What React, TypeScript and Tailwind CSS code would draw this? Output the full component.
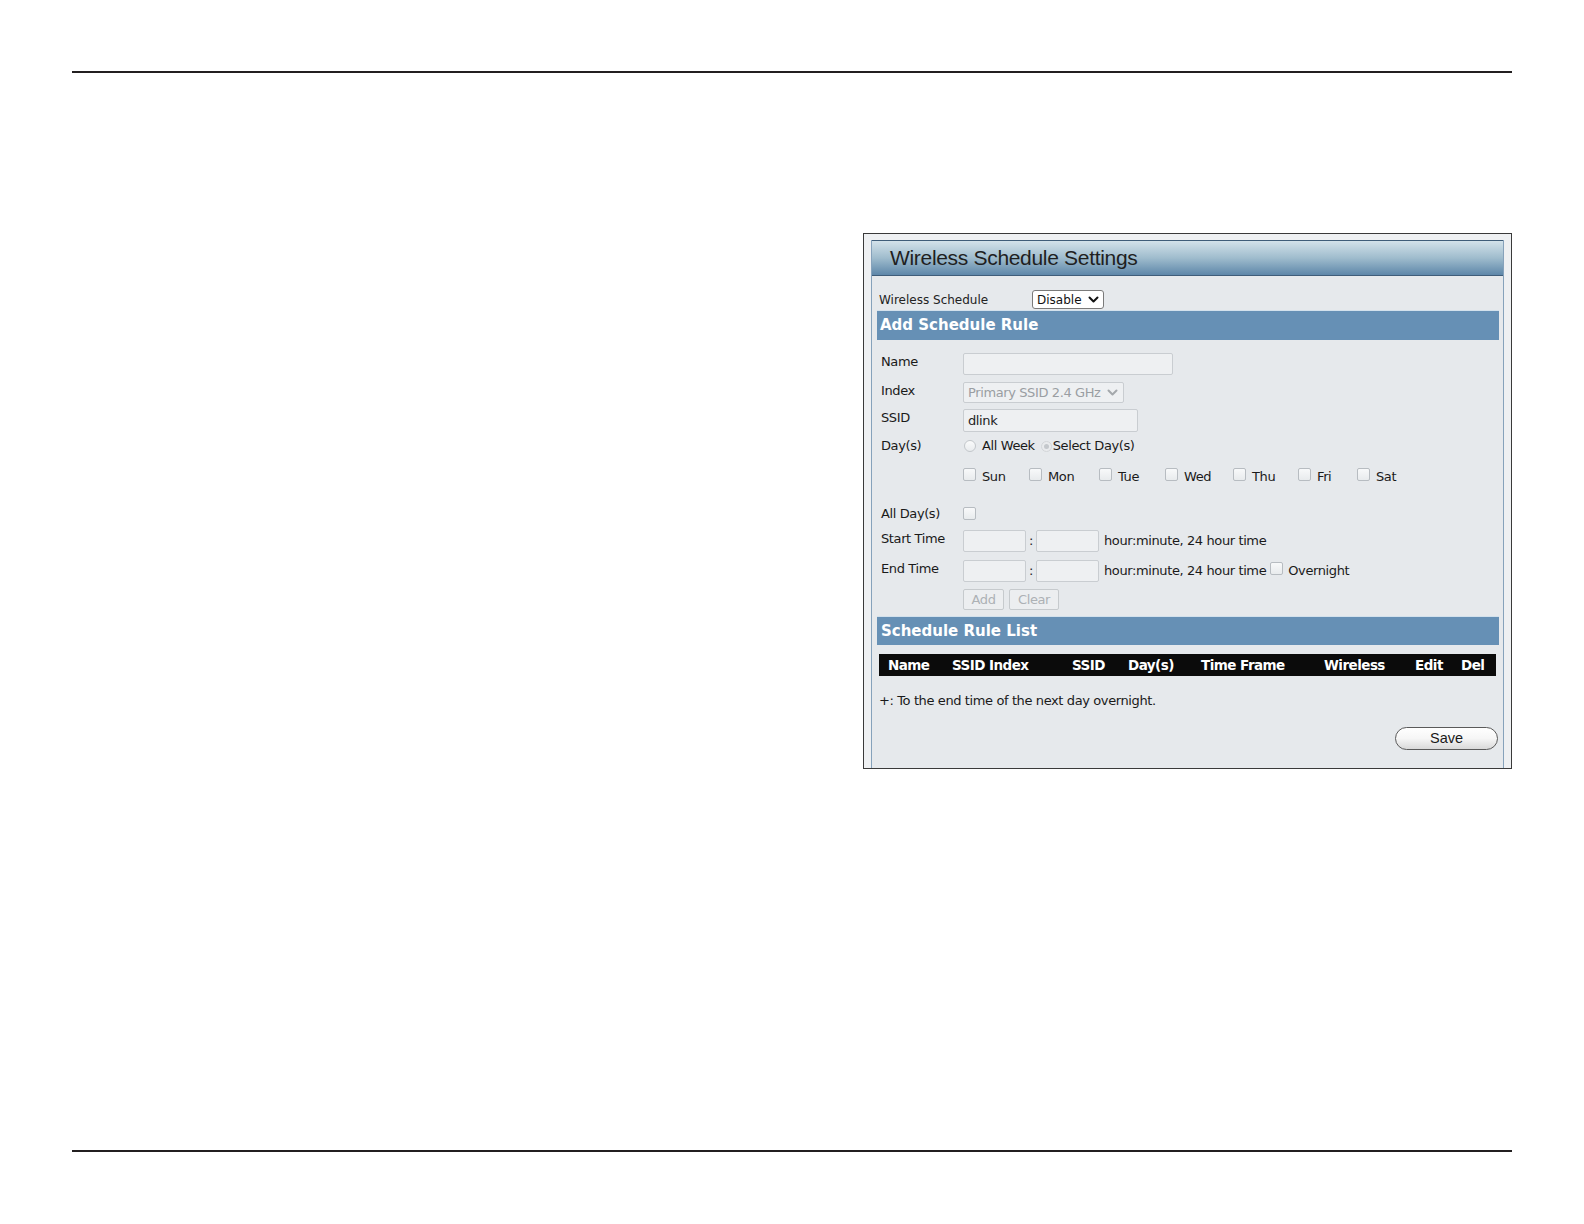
import React from "react";

const DJ = "font-['DejaVu_Sans',sans-serif]";
const LS = "font-['Liberation_Sans',Arial,sans-serif]";
const TXT = "text-[13px] tracking-[-0.03em]";

function Box({ className = "" }: { className?: string }) {
  return (
    <span
      className={`inline-block shrink-0 w-[13px] h-[13px] rounded-[2px] border border-[#b7bcc1] bg-gradient-to-b from-[#f8f9fa] to-[#e8ebed] ${className}`}
    />
  );
}

function Chevron({ color }: { color: string }) {
  return (
    <svg width="11" height="8" viewBox="0 0 11 8" className="shrink-0">
      <polyline points="1.5,1.5 5.5,5.5 9.5,1.5" fill="none" stroke={color} strokeWidth="2" strokeLinecap="round" strokeLinejoin="round" />
    </svg>
  );
}

function Input({ w, value = "" }: { w: string; value?: string }) {
  return (
    <div
      className={`${w} h-full rounded-[2px] border border-[#c9cdd1] bg-[#eef0f2] pl-[4px] flex items-center ${TXT} text-[#222] ${DJ}`}
    >
      {value}
    </div>
  );
}

function Label({ children }: { children: React.ReactNode }) {
  return (
    <div className={`w-[82px] shrink-0 self-start leading-[17px] ${TXT} text-[#1a1a1a] whitespace-nowrap ${DJ}`}>
      {children}
    </div>
  );
}

const days: { d: string; w: string }[] = [
  { d: "Sun", w: "w-[66px]" },
  { d: "Mon", w: "w-[70px]" },
  { d: "Tue", w: "w-[66px]" },
  { d: "Wed", w: "w-[68px]" },
  { d: "Thu", w: "w-[65px]" },
  { d: "Fri", w: "w-[59px]" },
  { d: "Sat", w: "w-[40px]" },
];

const cols: { t: string; w: string }[] = [
  { t: "Name", w: "w-[64px]" },
  { t: "SSID Index", w: "w-[120px]" },
  { t: "SSID", w: "w-[56px]" },
  { t: "Day(s)", w: "w-[73px]" },
  { t: "Time Frame", w: "w-[123px]" },
  { t: "Wireless", w: "w-[91px]" },
  { t: "Edit", w: "w-[46px]" },
  { t: "Del", w: "w-[30px]" },
];

export default function App() {
  return (
    <div className="w-[1584px] h-[1224px] bg-white overflow-hidden">
      <div className="pt-[71px] px-[72px]">
        <div className="h-[2px] bg-[#231f20]" />

        <div className="mt-[160px] ml-auto w-[649px] h-[536px] border border-[#3a3a3a] bg-[#eef0f2] pt-[6px] px-[7px] overflow-hidden">
          <div className="h-full border-x border-[#86a2bb] bg-[#e6e9ec]">
            {/* Title */}
            <div className="h-[36px] border-y border-[#3f5d79] bg-gradient-to-b from-[#d3e2ea] via-[#9fbccd] to-[#5e87a9] flex items-center pl-[18px]">
              <span className={`text-[21px] tracking-[-0.015em] text-[#1f1f1f] whitespace-nowrap ${LS}`}>
                Wireless Schedule Settings
              </span>
            </div>

            <div className="pl-[5px] pr-[4px]">
              {/* Wireless schedule */}
              <div className="mt-[14px] h-[19px] flex items-center pl-[2px]">
                <div className={`w-[153px] text-[12px] text-[#222] whitespace-nowrap ${DJ}`}>Wireless Schedule</div>
                <div className={`w-[72px] h-[19px] rounded-[3px] border border-[#7a7a7a] bg-white flex items-center justify-between pl-[4px] pr-[4px] text-[12px] text-[#111] ${DJ}`}>
                  <span>Disable</span>
                  <Chevron color="#111" />
                </div>
              </div>

              {/* Add schedule rule bar */}
              <div className="mt-[1px] h-[30px] border-t border-[#d3e1ec] bg-[#6690b5] flex items-center pl-[3px]">
                <span className={`text-[15px] font-bold text-white whitespace-nowrap ${DJ}`}>Add Schedule Rule</span>
              </div>

              <div className="pl-[4px]">
                {/* Name */}
                <div className="mt-[13px] h-[22px] flex">
                  <Label>Name</Label>
                  <Input w="w-[210px]" />
                </div>
                {/* Index */}
                <div className="mt-[7px] h-[21px] flex">
                  <Label>Index</Label>
                  <div className={`w-[161px] h-full rounded-[2px] border border-[#c9cdd1] bg-[#eef0f2] flex items-center justify-between pl-[4px] pr-[5px] ${TXT} text-[#9a9ea2] ${DJ}`}>
                    <span className="whitespace-nowrap">Primary SSID 2.4 GHz</span>
                    <Chevron color="#a4a8ac" />
                  </div>
                </div>
                {/* SSID */}
                <div className="mt-[6px] h-[23px] flex">
                  <Label>SSID</Label>
                  <Input w="w-[175px]" value="dlink" />
                </div>
                {/* Day(s) */}
                <div className={`mt-[3px] h-[22px] flex items-center ${TXT} text-[#1a1a1a] ${DJ}`}>
                  <div className="w-[82px] shrink-0 whitespace-nowrap">Day(s)</div>
                  <span className="ml-[1px] w-[12px] h-[12px] rounded-full border border-[#c3c7cb] bg-gradient-to-b from-[#fafbfb] to-[#e9ecee]" />
                  <span className="ml-[6px] whitespace-nowrap">All Week</span>
                  <span className="ml-[6px] w-[11px] h-[11px] rounded-full border border-[#d3d6d9] bg-[#e9ebed] flex items-center justify-center">
                    <span className="w-[5px] h-[5px] rounded-full bg-[#c4c8cc]" />
                  </span>
                  <span className="ml-[1px] whitespace-nowrap">Select Day(s)</span>
                </div>
                {/* day checkboxes */}
                <div className={`mt-[9px] h-[22px] flex items-center pl-[82px] ${TXT} text-[#1a1a1a] ${DJ}`}>
                  {days.map((x) => (
                    <div key={x.d} className={`${x.w} shrink-0 flex items-center`}>
                      <Box className="mb-[6px]" />
                      <span className="ml-[6px]">{x.d}</span>
                    </div>
                  ))}
                </div>
                {/* All day */}
                <div className={`mt-[15px] h-[22px] flex items-center ${TXT} text-[#1a1a1a] ${DJ}`}>
                  <div className="w-[82px] shrink-0 whitespace-nowrap">All Day(s)</div>
                  <Box className="mb-[1px]" />
                </div>
                {/* Start time */}
                <div className="mt-[5px] h-[22px] flex">
                  <Label>Start Time</Label>
                  <Input w="w-[63px]" />
                  <span className={`w-[10px] text-center self-center ${TXT} text-[#222] ${DJ}`}>:</span>
                  <Input w="w-[63px]" />
                  <span className={`ml-[5px] self-center ${TXT} text-[#1a1a1a] whitespace-nowrap ${DJ}`}>hour:minute, 24 hour time</span>
                </div>
                {/* End time */}
                <div className="mt-[8px] h-[22px] flex">
                  <Label>End Time</Label>
                  <Input w="w-[63px]" />
                  <span className={`w-[10px] text-center self-center ${TXT} text-[#222] ${DJ}`}>:</span>
                  <Input w="w-[63px]" />
                  <div className={`ml-[5px] flex items-center ${TXT} text-[#1a1a1a] whitespace-nowrap ${DJ}`}>
                    <span>hour:minute, 24 hour time</span>
                    <Box className="ml-[4px] mb-[5px]" />
                    <span className="ml-[5px]">Overnight</span>
                  </div>
                </div>
                {/* Buttons */}
                <div className={`mt-[7px] h-[21px] flex pl-[82px] ${TXT} text-[#adb1b5] ${DJ}`}>
                  <div className="w-[41px] h-full rounded-[2px] border border-[#c6cacd] bg-[#eceef0] flex items-center justify-center">Add</div>
                  <div className="ml-[5px] w-[50px] h-full rounded-[2px] border border-[#c6cacd] bg-[#eceef0] flex items-center justify-center">Clear</div>
                </div>
              </div>

              {/* Schedule rule list bar */}
              <div className="mt-[6px] h-[29px] border-t border-[#d3e1ec] bg-[#6690b5] flex items-center pl-[4px]">
                <span className={`text-[15px] font-bold text-white whitespace-nowrap ${DJ}`}>Schedule Rule List</span>
              </div>

              {/* table header */}
              <div className="mt-[9px] ml-[2px] mr-[3px] h-[22px] bg-[#0b0b0b] flex items-center pl-[9px]">
                {cols.map((c) => (
                  <span key={c.t} className={`${c.w} shrink-0 text-[13.5px] tracking-[-0.04em] font-bold text-white whitespace-nowrap ${DJ}`}>
                    {c.t}
                  </span>
                ))}
              </div>

              {/* footnote */}
              <div className={`mt-[14px] h-[22px] flex items-center pl-[2px] ${TXT} text-[#1a1a1a] whitespace-nowrap ${DJ}`}>
                +: To the end time of the next day overnight.
              </div>

              {/* save */}
              <div className="mt-[15px] flex justify-end pr-[1px]">
                <div className={`w-[103px] h-[23px] rounded-full border border-[#5a5a5a] bg-gradient-to-b from-white via-[#f6f6f6] to-[#d9d9d9] flex items-center justify-center text-[14.5px] text-[#1a1a1a] ${LS}`}>
                  Save
                </div>
              </div>
            </div>
          </div>
        </div>

        <div className="mt-[381px] h-[2px] bg-[#231f20]" />
      </div>
    </div>
  );
}
